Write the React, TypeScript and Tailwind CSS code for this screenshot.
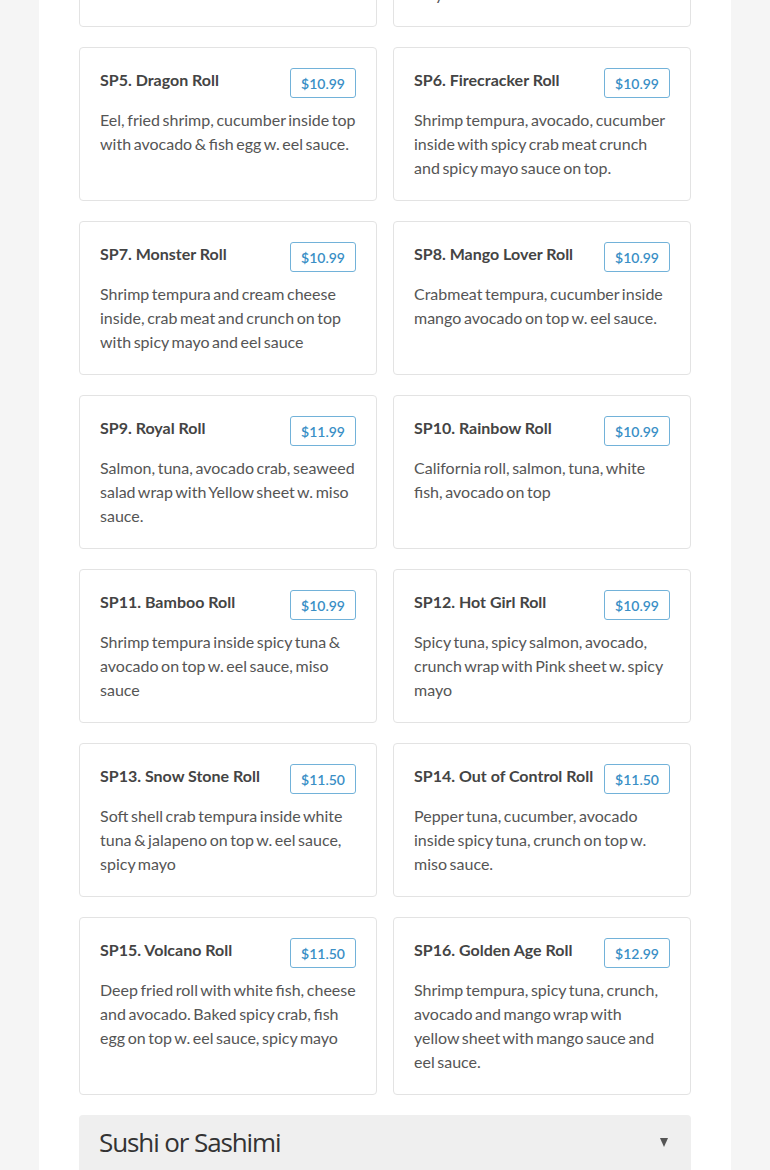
interface Roll {
  code: string;
  name: string;
  price: string;
  lines: string[];
}

// line breaks follow the reference layout
const topRow: Roll[] = [
  { code: 'SP3', name: 'Spider Roll', price: '$10.99', lines: ['Soft shell crab, avocado, cucumber,', 'fish egg w. eel sauce.'] },
  { code: 'SP4', name: 'Crazy Roll', price: '$10.99', lines: ['Shrimp tempura, cucumber inside,', 'spicy tuna on top w. eel sauce and', 'spicy mayo, crunch, scallion &', 'mayo.'] },
];

const rolls: Roll[] = [
  { code: 'SP5', name: 'Dragon Roll', price: '$10.99', lines: ['Eel, fried shrimp, cucumber inside top', 'with avocado & fish egg w. eel sauce.'] },
  { code: 'SP6', name: 'Firecracker Roll', price: '$10.99', lines: ['Shrimp tempura, avocado, cucumber', 'inside with spicy crab meat crunch', 'and spicy mayo sauce on top.'] },
  { code: 'SP7', name: 'Monster Roll', price: '$10.99', lines: ['Shrimp tempura and cream cheese', 'inside, crab meat and crunch on top', 'with spicy mayo and eel sauce'] },
  { code: 'SP8', name: 'Mango Lover Roll', price: '$10.99', lines: ['Crabmeat tempura, cucumber inside', 'mango avocado on top w. eel sauce.'] },
  { code: 'SP9', name: 'Royal Roll', price: '$11.99', lines: ['Salmon, tuna, avocado crab, seaweed', 'salad wrap with Yellow sheet w. miso', 'sauce.'] },
  { code: 'SP10', name: 'Rainbow Roll', price: '$10.99', lines: ['California roll, salmon, tuna, white', 'fish, avocado on top'] },
  { code: 'SP11', name: 'Bamboo Roll', price: '$10.99', lines: ['Shrimp tempura inside spicy tuna &', 'avocado on top w. eel sauce, miso', 'sauce'] },
  { code: 'SP12', name: 'Hot Girl Roll', price: '$10.99', lines: ['Spicy tuna, spicy salmon, avocado,', 'crunch wrap with Pink sheet w. spicy', 'mayo'] },
  { code: 'SP13', name: 'Snow Stone Roll', price: '$11.50', lines: ['Soft shell crab tempura inside white', 'tuna & jalapeno on top w. eel sauce,', 'spicy mayo'] },
  { code: 'SP14', name: 'Out of Control Roll', price: '$11.50', lines: ['Pepper tuna, cucumber, avocado', 'inside spicy tuna, crunch on top w.', 'miso sauce.'] },
  { code: 'SP15', name: 'Volcano Roll', price: '$11.50', lines: ['Deep fried roll with white fish, cheese', 'and avocado. Baked spicy crab, fish', 'egg on top w. eel sauce, spicy mayo'] },
  { code: 'SP16', name: 'Golden Age Roll', price: '$12.99', lines: ['Shrimp tempura, spicy tuna, crunch,', 'avocado and mango wrap with', 'yellow sheet with mango sauce and', 'eel sauce.'] },
];

const RollCard = ({ roll }: { roll: Roll }) => (
  <div className="bg-white border border-[#e3e3e3] rounded-[4px] p-5">
    <div className="flex items-start justify-between gap-1">
      <h3 className="text-[16px] leading-6 font-bold text-[#444] whitespace-nowrap">
        {roll.code}. {roll.name}
      </h3>
      <span className="shrink-0 h-[30px] px-[10px] flex items-center border border-[#72b2d9] rounded-[3px] text-[14px] font-semibold text-[#3a8fc6]">
        {roll.price}
      </span>
    </div>
    <p className="mt-[10px] text-[16px] leading-6 text-[#555] [word-spacing:-1.5px]">
      {roll.lines.map((l, i) => (
        <span key={i} className="block whitespace-nowrap">{l}</span>
      ))}
    </p>
  </div>
);

export default function App() {
  return (
    <div className="min-h-[1170px] bg-[#f5f5f5] overflow-hidden font-['Lato',sans-serif]">
      <div className="mx-[39px] bg-white px-10 pb-10">
        {/* tail of the row above, scrolled mostly out of view */}
        <div className="h-[27px] overflow-hidden flex flex-col justify-end">
          <div className="grid grid-cols-2 gap-x-4">
            {topRow.map((r) => (
              <RollCard key={r.code} roll={r} />
            ))}
          </div>
        </div>

        <div className="mt-5 grid grid-cols-2 gap-x-4 gap-y-5">
          {rolls.map((r) => (
            <RollCard key={r.code} roll={r} />
          ))}
        </div>

        {/* next category */}
        <div className="mt-5 h-[60px] rounded-[4px] bg-[#efefef] pl-5 pr-[23px] pt-[9px] flex items-start justify-between">
          <span className="font-['Open_Sans',sans-serif] text-[26px] leading-9 tracking-[-1.1px] text-[#333]">Sushi or Sashimi</span>
          <svg width="8" height="9" viewBox="0 0 8 9" className="mt-[14px]">
            <path d="M0 0 H8 L4 9 Z" fill="#555" />
          </svg>
        </div>
      </div>
    </div>
  );
}
